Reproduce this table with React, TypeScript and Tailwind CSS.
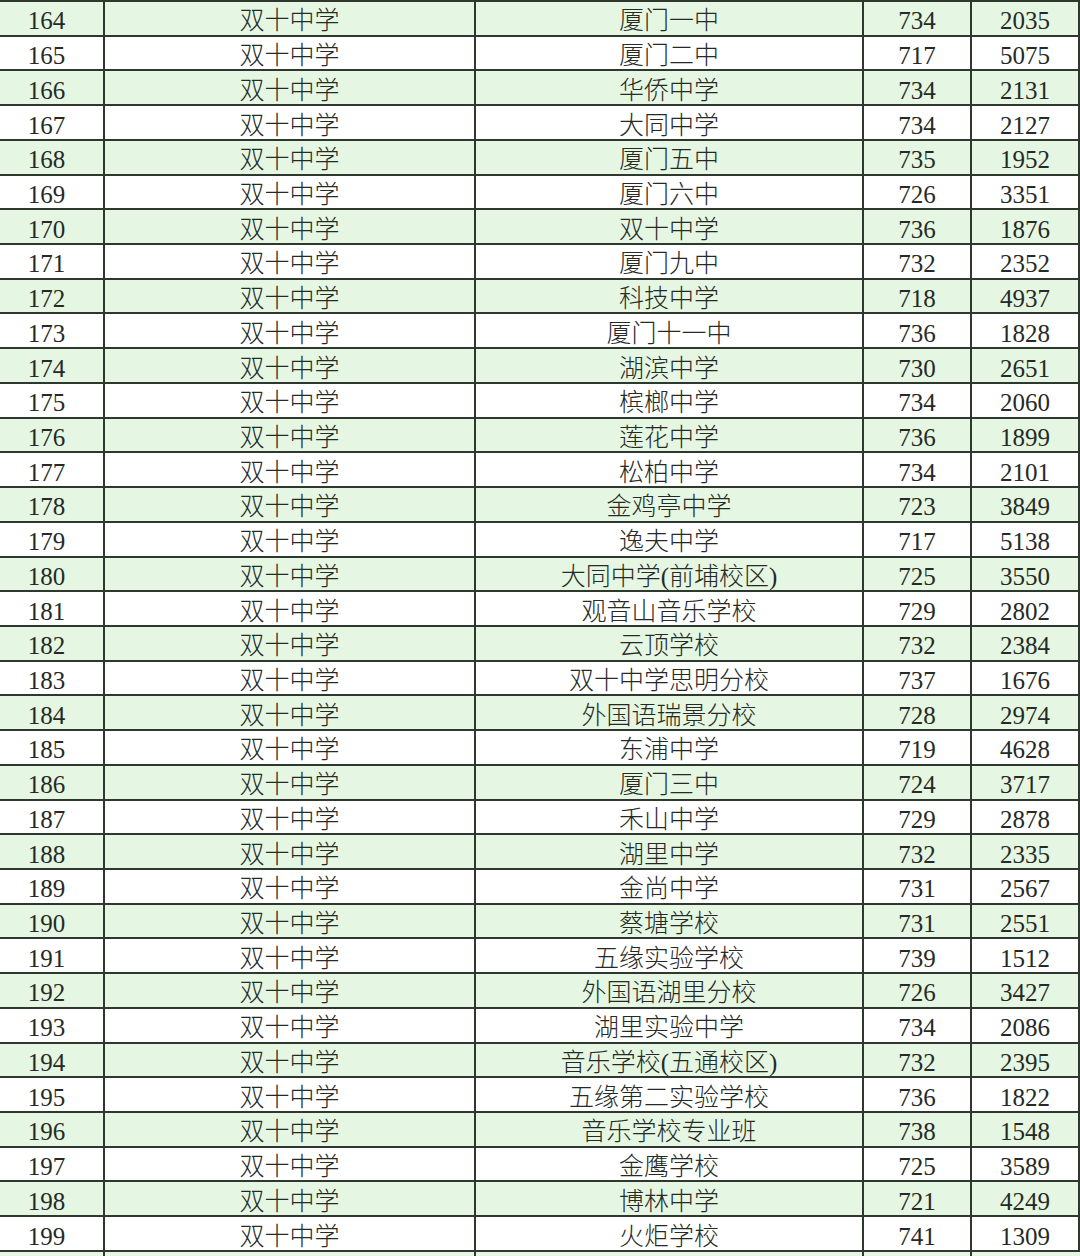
import React from "react"

// rank, school, destination, score, position
const rows: [number, string, string, number, number][] = [
  [164, "双十中学", "厦门一中", 734, 2035],
  [165, "双十中学", "厦门二中", 717, 5075],
  [166, "双十中学", "华侨中学", 734, 2131],
  [167, "双十中学", "大同中学", 734, 2127],
  [168, "双十中学", "厦门五中", 735, 1952],
  [169, "双十中学", "厦门六中", 726, 3351],
  [170, "双十中学", "双十中学", 736, 1876],
  [171, "双十中学", "厦门九中", 732, 2352],
  [172, "双十中学", "科技中学", 718, 4937],
  [173, "双十中学", "厦门十一中", 736, 1828],
  [174, "双十中学", "湖滨中学", 730, 2651],
  [175, "双十中学", "槟榔中学", 734, 2060],
  [176, "双十中学", "莲花中学", 736, 1899],
  [177, "双十中学", "松柏中学", 734, 2101],
  [178, "双十中学", "金鸡亭中学", 723, 3849],
  [179, "双十中学", "逸夫中学", 717, 5138],
  [180, "双十中学", "大同中学(前埔校区)", 725, 3550],
  [181, "双十中学", "观音山音乐学校", 729, 2802],
  [182, "双十中学", "云顶学校", 732, 2384],
  [183, "双十中学", "双十中学思明分校", 737, 1676],
  [184, "双十中学", "外国语瑞景分校", 728, 2974],
  [185, "双十中学", "东浦中学", 719, 4628],
  [186, "双十中学", "厦门三中", 724, 3717],
  [187, "双十中学", "禾山中学", 729, 2878],
  [188, "双十中学", "湖里中学", 732, 2335],
  [189, "双十中学", "金尚中学", 731, 2567],
  [190, "双十中学", "蔡塘学校", 731, 2551],
  [191, "双十中学", "五缘实验学校", 739, 1512],
  [192, "双十中学", "外国语湖里分校", 726, 3427],
  [193, "双十中学", "湖里实验中学", 734, 2086],
  [194, "双十中学", "音乐学校(五通校区)", 732, 2395],
  [195, "双十中学", "五缘第二实验学校", 736, 1822],
  [196, "双十中学", "音乐学校专业班", 738, 1548],
  [197, "双十中学", "金鹰学校", 725, 3589],
  [198, "双十中学", "博林中学", 721, 4249],
  [199, "双十中学", "火炬学校", 741, 1309],
]

const cell = "flex items-center justify-center pt-[5px] border-r-2 border-[#2f382f]"

export default function App() {
  return (
    <div
      className="w-[1080px] h-[1256px] overflow-hidden bg-white text-[#262a26] text-[25px] leading-none"
      style={{ fontFamily: '"Liberation Serif", "Noto Sans CJK SC", serif' }}
    >
      <div className="pt-[0px]">
        <div className="border-t-2 border-[#2f382f]">
          {rows.map(([rank, school, dest, score, pos], i) => (
            <div
              key={rank}
              className={`grid grid-cols-[105px_371px_388px_108px_108px] h-[34.72px] border-b-2 border-[#2f382f] ${
                i % 2 === 0 ? "bg-[#e5f7e2]" : "bg-white"
              }`}
            >
              <div className={`${cell} pr-[10px]`}>{rank}</div>
              <div className={`${cell} font-light`}>{school}</div>
              <div className={`${cell} font-light`}>{dest}</div>
              <div className={cell}>{score}</div>
              <div className={`${cell} border-r-0`}>{pos}</div>
            </div>
          ))}
          <div className="grid grid-cols-[105px_371px_388px_108px_108px] h-[34.72px] bg-[#e5f7e2]">
            <div className={cell}></div>
            <div className={cell}></div>
            <div className={cell}></div>
            <div className={cell}></div>
            <div></div>
          </div>
        </div>
      </div>
    </div>
  )
}
